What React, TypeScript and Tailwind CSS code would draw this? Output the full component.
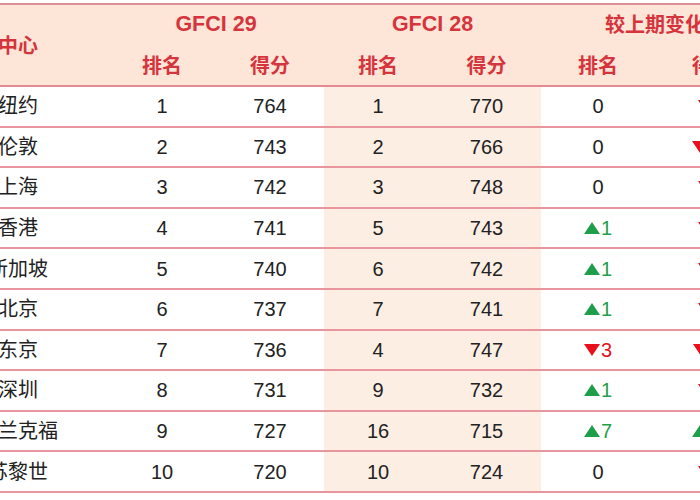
import React from "react";

const rows: { city: string; r29: number; s29: number; r28: number; s28: number; dr: number; ds: number }[] = [
  { city: "纽约", r29: 1, s29: 764, r28: 1, s28: 770, dr: 0, ds: -6 },
  { city: "伦敦", r29: 2, s29: 743, r28: 2, s28: 766, dr: 0, ds: -23 },
  { city: "上海", r29: 3, s29: 742, r28: 3, s28: 748, dr: 0, ds: -6 },
  { city: "香港", r29: 4, s29: 741, r28: 5, s28: 743, dr: 1, ds: -2 },
  { city: "新加坡", r29: 5, s29: 740, r28: 6, s28: 742, dr: 1, ds: -2 },
  { city: "北京", r29: 6, s29: 737, r28: 7, s28: 741, dr: 1, ds: -4 },
  { city: "东京", r29: 7, s29: 736, r28: 4, s28: 747, dr: -3, ds: -11 },
  { city: "深圳", r29: 8, s29: 731, r28: 9, s28: 732, dr: 1, ds: -1 },
  { city: "法兰克福", r29: 9, s29: 727, r28: 16, s28: 715, dr: 7, ds: 12 },
  { city: "苏黎世", r29: 10, s29: 720, r28: 10, s28: 724, dr: 0, ds: -4 },
];

function Up() {
  return (
    <svg width="16" height="12" viewBox="0 0 16 12" className="shrink-0">
      <polygon points="8,0 16,12 0,12" fill="#1f9e49" />
    </svg>
  );
}

function Down() {
  return (
    <svg width="16" height="12" viewBox="0 0 16 12" className="shrink-0">
      <polygon points="0,0 16,0 8,12" fill="#e8101c" />
    </svg>
  );
}

function Change({ v }: { v: number }) {
  if (v === 0) return <span className="text-[#222222]">0</span>;
  if (v > 0)
    return (
      <span className="flex items-center gap-[1px] text-[#1f9e49]">
        <Up />
        <span>{v}</span>
      </span>
    );
  return (
    <span className="flex items-center gap-[1px] text-[#e8101c]">
      <Down />
      <span>{-v}</span>
    </span>
  );
}

const cols = "grid grid-cols-[180px_108px_108px_108px_109px_114px_114px]";

export default function App() {
  return (
    <div
      className="w-[700px] h-[500px] overflow-hidden bg-white pt-[3px]"
      style={{ fontFamily: '"Liberation Sans", "Noto Sans CJK SC", sans-serif' }}
    >
      <div className="ml-[-72px] w-[841px] text-[20px] leading-none">
        {/* header */}
        <div
          className={`${cols} grid-rows-[40px_40px] bg-[#fde5d8] border-t-2 border-b-2 border-t-[#dc8d95] border-b-[#e38a93] font-bold text-[#d6343c] box-content`}
        >
          <div className="row-span-2 flex items-center justify-end pr-[70px] pt-[1px]">金融中心</div>
          <div className="col-span-2 flex items-center justify-center text-[21.5px]">GFCI 29</div>
          <div className="col-span-2 flex items-center justify-center text-[21.5px]">GFCI 28</div>
          <div className="col-span-2 flex items-center justify-center">较上期变化</div>
          <div className="flex items-center justify-center pt-[1px]">排名</div>
          <div className="flex items-center justify-center pt-[1px]">得分</div>
          <div className="flex items-center justify-center pt-[1px]">排名</div>
          <div className="flex items-center justify-center pt-[1px]">得分</div>
          <div className="flex items-center justify-center pt-[1px]">排名</div>
          <div className="flex items-center justify-center pt-[1px]">得分</div>
        </div>
        {/* body */}
        {rows.map((r) => (
          <div key={r.city} className={`${cols} h-[40.6px] border-b-2 border-b-[#e8959d] text-[#222222]`}>
            <div className="flex items-center justify-center">{r.city}</div>
            <div className="flex items-center justify-center">{r.r29}</div>
            <div className="flex items-center justify-center">{r.s29}</div>
            <div className="flex items-center justify-center bg-[#fdeee4]">{r.r28}</div>
            <div className="flex items-center justify-center bg-[#fdeee4]">{r.s28}</div>
            <div className="flex items-center justify-center">
              <Change v={r.dr} />
            </div>
            <div className="flex items-center justify-center">
              <Change v={r.ds} />
            </div>
          </div>
        ))}
      </div>
    </div>
  );
}
